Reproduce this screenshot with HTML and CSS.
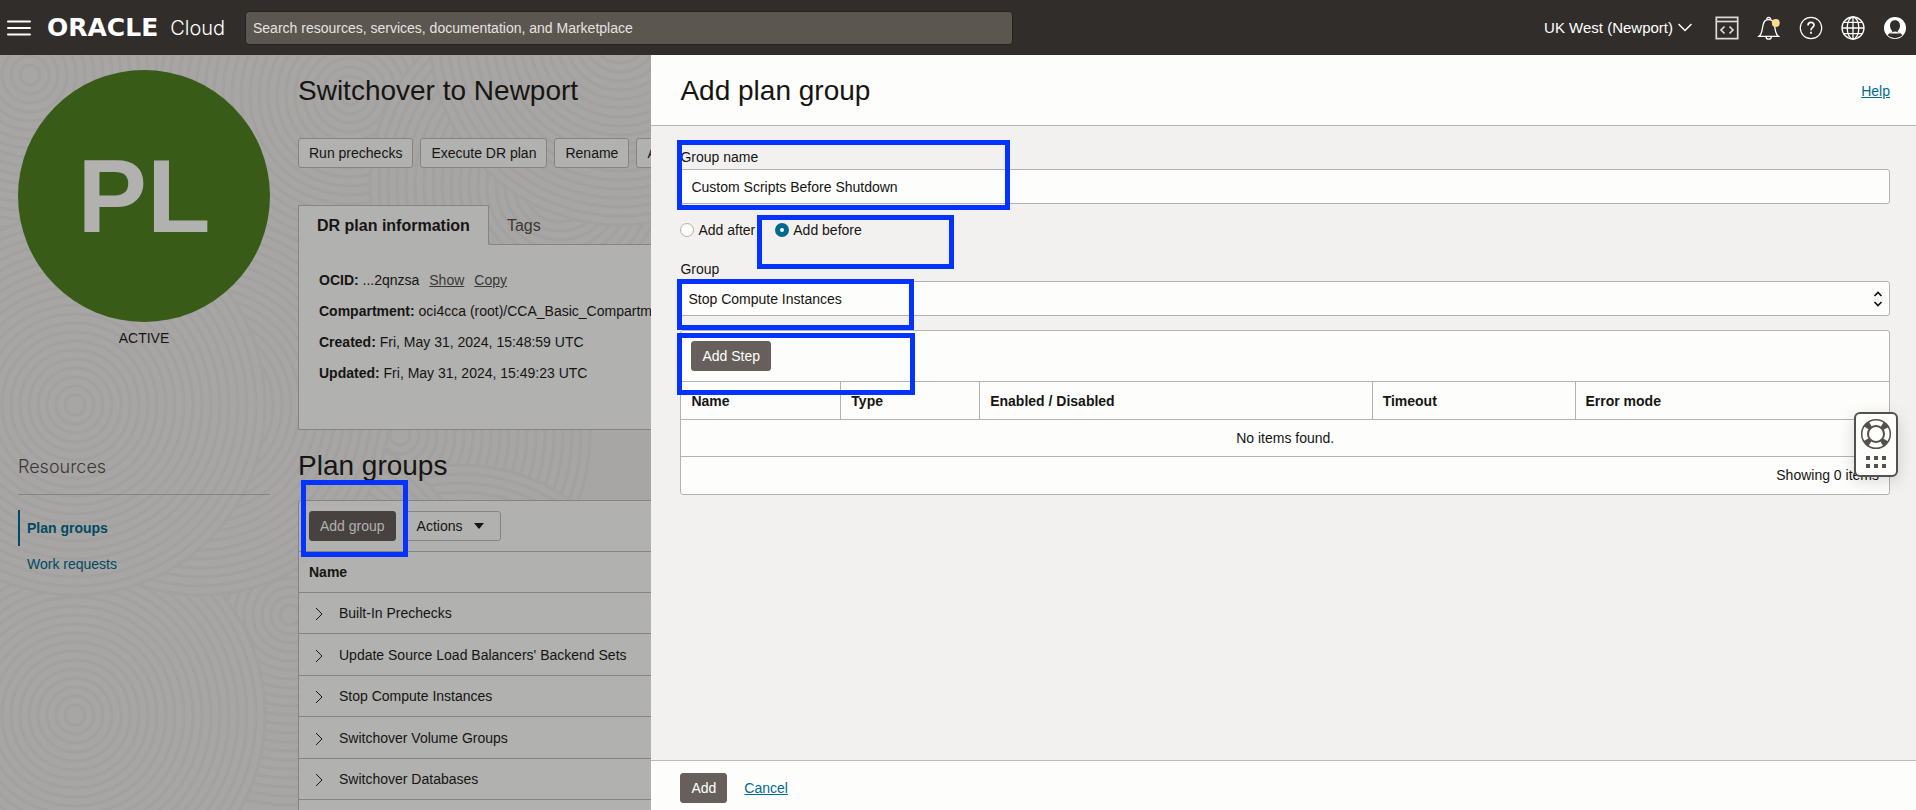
FILE: index.html
```html
<!DOCTYPE html>
<html lang="en">
<head>
  <meta charset="UTF-8">
  <title>Switchover to Newport | Oracle Cloud</title>
  <link rel="stylesheet" href="styles.css">
</head>
<body>

  <!-- Top bar -->
  <header class="topbar">
    <button class="icon-btn menu-btn" aria-label="Menu">
      <svg width="24" height="16" viewBox="0 0 24 16" stroke="#fff" stroke-width="2" stroke-linecap="round"><path d="M1 1.5h22M1 8h22M1 14.5h22"/></svg>
    </button>
    <a class="brand" href="#"><span class="brand-name">ORACLE</span><span class="brand-product">Cloud</span></a>
    <input class="search" type="text" aria-label="Search" placeholder="Search resources, services, documentation, and Marketplace">
    <nav class="tools">
      <button class="region-btn">UK West (Newport)
        <svg width="14" height="9" viewBox="0 0 14 9" fill="none" stroke="#fff" stroke-width="1.5"><path d="M.5 1L7 7.500L13.500 1"/></svg>
      </button>
      <button class="icon-btn" aria-label="Developer tools">
        <svg width="24" height="24" viewBox="0 0 24 24" fill="none" stroke="#e0dad6" stroke-width="1.700"><path d="M1.300 1.300h21.400v21.400H1.300z"/><path d="M1 5.500h22" /><path d="M9.500 10.500L6 14l3.500 3.500M14.500 10.500L18 14l-3.500 3.500"/></svg>
      </button>
      <button class="icon-btn" aria-label="Announcements">
        <svg width="24" height="24" viewBox="0 0 24 24" fill="none" stroke="#fff" stroke-width="1.300"><path d="M2 20.300h19.400c-1.500-1.200-2.300-2.700-2.800-5l-1.200-6C16.700 5.500 14.800 3.500 11.700 3.500S6.700 5.500 6 9.300l-1.200 6c-.5 2.300-1.300 3.800-2.800 5z"/><path d="M9.800 3.300a1.900 1.900 0 1 1 3.800 0M9 20.500a2.700 2.700 0 0 0 5.400 0"/><circle cx="18.800" cy="7" r="4" fill="#fcd98c" stroke="none"/></svg>
      </button>
      <button class="icon-btn" aria-label="Help">
        <svg width="24" height="24" viewBox="0 0 24 24" fill="none" stroke="#fff" stroke-width="1.200"><circle cx="12" cy="12" r="10.700"/><path d="M9 9.500c0-4 6-4 6-.5 0 2.500-3 2.500-3 5.300" stroke-width="1.700"/><path d="M12 15.700v2" stroke-width="1.800"/></svg>
      </button>
      <button class="icon-btn" aria-label="Language">
        <svg width="24" height="24" viewBox="0 0 24 24" fill="none" stroke="#fff" stroke-width="1.300"><circle cx="12" cy="12" r="11"/><ellipse cx="12" cy="12" rx="5.800" ry="11"/><path d="M12 1v22M1 12h22M3 6.300h18M3 17.700h18"/></svg>
      </button>
      <button class="icon-btn" aria-label="Profile">
        <svg width="24" height="24" viewBox="0 0 24 24"><circle cx="12" cy="12" r="11" fill="#fff"/><path d="M12 4.300c3.200 0 5 2.200 5 5.300 0 2.200-.8 4-2.200 5.400v1.200c2 .6 3.700 1.400 4.600 3A10.800 10.800 0 0 1 12 22.200a10.800 10.800 0 0 1-7.400-3c.9-1.600 2.600-2.400 4.600-3V15C7.800 13.600 7 11.800 7 9.600c0-3.100 1.800-5.300 5-5.300z" fill="#312d2a"/><path d="M9.200 16.200c1.800-1 3.800-1 5.600 0l2.700 1.300H6.500z" fill="#fff"/></svg>
      </button>
    </nav>
  </header>

  <main class="stage">

    <!-- Plan details, dimmed behind the drawer -->
    <div class="page">
      <svg class="texture" aria-hidden="true">
        <defs>
          <g id="rings" fill="#a7a6a4" stroke="#a2a19f" stroke-width="3">
            <circle r="190"/><circle r="181"/><circle r="172"/><circle r="163"/><circle r="154"/><circle r="145"/><circle r="136"/><circle r="127"/><circle r="118"/><circle r="109"/><circle r="100"/><circle r="91"/><circle r="82"/><circle r="73"/><circle r="64"/><circle r="55"/><circle r="46"/><circle r="37"/><circle r="28"/><circle r="19"/><circle r="10"/>
          </g>
        </defs>
        <use href="#rings" x="30" y="20"/>
        <use href="#rings" x="350" y="40"/>
        <use href="#rings" x="560" y="130"/>
        <use href="#rings" x="620" y="-20"/>
        <use href="#rings" x="400" y="380"/>
        <use href="#rings" x="460" y="600"/>
        <use href="#rings" x="290" y="560"/>
        <use href="#rings" x="20" y="800"/>
        <use href="#rings" x="75" y="660"/>
        <use href="#rings" x="200" y="350"/>
        <use href="#rings" x="75" y="350"/>
      </svg>

      <aside class="side">
        <div class="avatar">PL</div>
        <p class="status">ACTIVE</p>
        <h2 class="side-title">Resources</h2>
        <nav class="side-nav">
          <a class="side-link active" href="#">Plan groups</a>
          <a class="side-link" href="#">Work requests</a>
        </nav>
      </aside>

      <section class="details">
        <h1 class="heading">Switchover to Newport</h1>
        <div class="actions">
          <button class="btn dim">Run prechecks</button>
          <button class="btn dim">Execute DR plan</button>
          <button class="btn dim">Rename</button>
          <button class="btn dim">Add</button>
        </div>

        <div class="tabs">
          <button class="tab selected">DR plan information</button>
          <button class="tab">Tags</button>
        </div>
        <div class="info">
          <p><b>OCID:</b> ...2qnzsa <a href="#">Show</a><a href="#">Copy</a></p>
          <p><b>Compartment:</b> oci4cca (root)/CCA_Basic_Compartment</p>
          <p><b>Created:</b> Fri, May 31, 2024, 15:48:59 UTC</p>
          <p><b>Updated:</b> Fri, May 31, 2024, 15:49:23 UTC</p>
        </div>

        <h2 class="heading groups-heading">Plan groups</h2>
        <div class="groups">
          <div class="groups-bar">
            <div class="marked mark-add-group"><button class="btn primary dim">Add group</button></div>
            <button class="btn dim">Actions <span class="caret"></span></button>
          </div>
          <table class="groups-table">
            <thead><tr><th>Name</th></tr></thead>
            <tbody>
              <tr><td><svg class="chevron" viewBox="0 0 8 14"><path d="M1 1l6 6-6 6"/></svg>Built-In Prechecks</td></tr>
              <tr><td><svg class="chevron" viewBox="0 0 8 14"><path d="M1 1l6 6-6 6"/></svg>Update Source Load Balancers' Backend Sets</td></tr>
              <tr><td><svg class="chevron" viewBox="0 0 8 14"><path d="M1 1l6 6-6 6"/></svg>Stop Compute Instances</td></tr>
              <tr><td><svg class="chevron" viewBox="0 0 8 14"><path d="M1 1l6 6-6 6"/></svg>Switchover Volume Groups</td></tr>
              <tr><td><svg class="chevron" viewBox="0 0 8 14"><path d="M1 1l6 6-6 6"/></svg>Switchover Databases</td></tr>
              <tr><td></td></tr>
            </tbody>
          </table>
        </div>
      </section>
    </div>

    <!-- Add plan group drawer -->
    <form class="drawer">
      <div class="drawer-head">
        <h2 class="heading">Add plan group</h2>
        <a class="link" href="#">Help</a>
      </div>

      <div class="drawer-body">
        <div class="field marked mark-name">
          <label for="groupName">Group name</label>
          <input class="box" type="text" id="groupName" value="Custom Scripts Before Shutdown">
        </div>

        <div class="radios">
          <label class="radio"><input type="radio" name="position">Add after</label>
          <label class="radio marked mark-before"><input type="radio" name="position" checked>Add before</label>
        </div>

        <div class="field">
          <label for="group">Group</label>
          <div class="select-wrap marked mark-group">
            <select class="box" id="group">
              <option>Stop Compute Instances</option>
            </select>
            <svg class="select-arrows" width="10" height="16" viewBox="0 0 10 16" fill="none" stroke="#161513" stroke-width="1.700"><path d="M1.500 5L5 1.500L8.500 5M1.500 11L5 14.500L8.500 11"/></svg>
          </div>
        </div>

        <div class="steps">
          <div class="steps-bar marked mark-step"><button class="btn primary" type="button">Add Step</button></div>
          <table class="steps-table">
            <colgroup><col class="c-name"><col class="c-type"><col class="c-enabled"><col class="c-timeout"><col></colgroup>
            <thead>
              <tr><th>Name</th><th>Type</th><th>Enabled / Disabled</th><th>Timeout</th><th>Error mode</th></tr>
            </thead>
            <tbody>
              <tr><td class="empty" colspan="5">No items found.</td></tr>
            </tbody>
            <tfoot>
              <tr><td class="count" colspan="5">Showing 0 items</td></tr>
            </tfoot>
          </table>
        </div>
      </div>

      <div class="drawer-foot">
        <button class="btn primary" type="button">Add</button>
        <a class="link" href="#">Cancel</a>
      </div>
    </form>

    <button class="support" aria-label="Support">
      <svg width="32" height="32" viewBox="0 0 32 32" fill="none" stroke="#55504c"><circle cx="16" cy="16" r="11" stroke-width="7" stroke-dasharray="5.280 12" stroke-dashoffset="-6"/><circle cx="16" cy="16" r="14.300" stroke-width="1.500"/><circle cx="16" cy="16" r="8" stroke-width="2"/></svg>
      <svg width="20" height="12" viewBox="0 0 20 12" fill="#55504c"><path d="M0 0h4v4H0zM8 0h4v4H8zM16 0h4v4h-4zM0 8h4v4H0zM8 8h4v4H8zM16 8h4v4h-4z"/></svg>
    </button>
  </main>

</body>
</html>
```

FILE: styles.css
```css
*,
*::after {
  box-sizing: border-box;
  margin: 0;
  padding: 0;
}

body {
  font-family: "Liberation Sans", Arial, sans-serif;
  font-size: 14px;
  line-height: 20px;
  color: #161513;
  height: 100vh;
  display: flex;
  flex-direction: column;
  overflow: hidden;
}

button,
input,
select {
  font: inherit;
  color: inherit;
}

button {
  cursor: pointer;
}

/* Top bar */
.topbar {
  display: flex;
  align-items: center;
  flex: none;
  height: 55px;
  padding: 0 9px 0 7px;
  background: #312d2a;
  color: #fff;
}

.icon-btn {
  display: flex;
  background: none;
  border: none;
}

.brand {
  display: flex;
  align-items: center;
  gap: 12px;
  width: 198px;
  margin-left: 16px;
  color: #fff;
  text-decoration: none;
}

.brand-name {
  font-family: "DejaVu Sans", sans-serif;
  font-size: 25px;
  font-weight: bold;
}

.brand-product {
  font-family: Inter, sans-serif;
  font-size: 20px;
  font-weight: 300;
}

.search {
  width: 768px;
  height: 34px;
  padding: 0 7px;
  background: #5b5650;
  border: 1px solid #24211f;
  border-radius: 4px;
}

.search::placeholder {
  color: #e6e3e0;
  opacity: 1;
}

.tools {
  display: flex;
  align-items: center;
  gap: 18px;
  margin-left: auto;
}

.region-btn {
  display: flex;
  align-items: center;
  gap: 5px;
  margin-right: 5px;
  background: none;
  border: none;
  font-size: 15px;
}

/* Dimmed page */
.stage {
  position: relative;
  flex: 1;
  min-height: 0;
  overflow: hidden;
}

.page {
  position: relative;
  display: flex;
  gap: 28px;
  height: 100%;
  padding: 15px 0 0 18px;
  background: #a7a6a4;
  overflow: hidden;
}

.texture {
  position: absolute;
  top: 0;
  left: 0;
  width: 100%;
  height: 100%;
}

.side,
.details {
  position: relative;
}

.side {
  flex: none;
  width: 252px;
}

.avatar {
  height: 252px;
  border-radius: 50%;
  background: #385c17;
  color: #b1b1af;
  font-size: 104px;
  font-weight: bold;
  line-height: 252px;
  text-align: center;
}

.status {
  margin-top: 6px;
  text-align: center;
}

.side-title {
  height: 42px;
  margin: 105px 0 15px;
  border-bottom: 1px solid #868381;
  color: #3a3836;
  font-family: Inter, sans-serif;
  font-size: 18px;
  font-weight: 300;
  line-height: 28px;
}

.side-link {
  display: block;
  padding: 8px 7px;
  border-left: 2px solid transparent;
  color: #004a62;
  text-decoration: none;
}

.side-link.active {
  border-color: #004a62;
  font-weight: bold;
}

.details {
  flex: 1;
}

.heading {
  font-size: 28px;
  font-weight: normal;
  line-height: 42px;
}

.actions {
  display: flex;
  gap: 7px;
  margin: 26px 0 37px;
}

.btn {
  height: 30px;
  padding: 0 10px;
  background: none;
  border: 1px solid #868381;
  border-radius: 3px;
  white-space: nowrap;
}

.btn.primary {
  background: #665f5b;
  border-color: #665f5b;
  color: #fff;
}

.btn.dim {
  background: #b1b1af;
}

.btn.primary.dim {
  background: #474240;
  border-color: #474240;
  color: #b1b1af;
}

.tabs {
  display: flex;
}

.tab {
  height: 40px;
  padding: 2px 18px 0;
  background: none;
  border: none;
  border-bottom: 1px solid #868381;
  color: #3a3836;
  font-size: 16px;
}

.tab.selected {
  background: #b1b1af;
  border: 1px solid #868381;
  border-bottom-color: #b1b1af;
  color: #161513;
  font-weight: bold;
}

.tabs::after {
  content: "";
  flex: 1;
  border-bottom: 1px solid #868381;
}

.info {
  height: 185px;
  padding: 20px;
  background: #b1b1af;
  border: 1px solid #868381;
  border-top: none;
  line-height: 31px;
}

.info a {
  margin: 0 4px 0 6px;
  color: #3a3836;
}

.groups-heading {
  margin: 15px 0 13px;
}

.groups {
  background: #b1b1af;
  border: 1px solid #868381;
  border-radius: 3px;
}

.groups-bar {
  display: flex;
  align-items: center;
  gap: 10px;
  height: 50px;
  padding: 0 10px;
}

.caret {
  display: inline-block;
  margin: 0 6px 2px 8px;
  border: 5px solid transparent;
  border-top: 6px solid #161513;
  border-bottom: none;
}

.groups-table {
  width: 100%;
  border-collapse: collapse;
}

.groups-table th {
  height: 41px;
  padding-left: 10px;
  border-top: 1px solid #868381;
  text-align: left;
}

.groups-table td {
  height: 41px;
  padding-left: 16px;
  border-top: 1px solid #868381;
}

.groups-table tr:nth-child(even) td {
  height: 42px;
}

.chevron {
  width: 8px;
  height: 14px;
  margin-right: 16px;
  fill: none;
  stroke: #161513;
  vertical-align: -3px;
}

/* Drawer */
.drawer {
  position: absolute;
  top: 0;
  right: 0;
  bottom: 0;
  left: 34%;
  display: flex;
  flex-direction: column;
  background: #f3f1f0;
}

.drawer-head {
  display: flex;
  align-items: center;
  justify-content: space-between;
  height: 71px;
  padding: 2px 26px 0 29px;
  background: #fdfdfb;
  border-bottom: 1px solid #b5b2ae;
}

.link {
  color: #006b8f;
}

.drawer-body {
  flex: 1;
  padding: 21px 26px 0 29px;
}

.field > label {
  display: block;
  height: 22px;
}

.box {
  display: block;
  width: 100%;
  height: 35px;
  padding: 0 10px;
  background: #fdfdfb;
  border: 1px solid #b5b2ae;
  border-radius: 3px;
}

.radios {
  display: flex;
  gap: 20px;
  margin: 16px 0 19px;
}

.radio {
  display: flex;
  align-items: center;
  gap: 4px;
}

.radio input {
  appearance: none;
  width: 14px;
  height: 14px;
  background: #fdfdfb;
  border: 1px solid #b5b2ae;
  border-radius: 50%;
}

.radio input:checked {
  border: 5px solid #006b8f;
}

.select-wrap select {
  appearance: none;
  padding: 0 7px;
}

.select-arrows {
  position: absolute;
  top: 10px;
  right: 7px;
  pointer-events: none;
}

.steps {
  margin-top: 14px;
  background: #fdfdfb;
  border: 1px solid #b5b2ae;
  border-radius: 3px;
}

.steps-bar {
  height: 50px;
  padding: 10px;
}

.steps-table {
  width: 100%;
  border-collapse: collapse;
  table-layout: fixed;
}

.c-name { width: 13.2%; }
.c-type { width: 11.5%; }
.c-enabled { width: 32.5%; }
.c-timeout { width: 16.8%; }

.steps-table th,
.steps-table td {
  height: 37px;
  padding: 0 10px;
  border-top: 1px solid #b5b2ae;
}

.steps-table th {
  height: 38px;
  text-align: left;
}

.steps-table th + th {
  border-left: 1px solid #b5b2ae;
}

.steps-table .empty {
  text-align: center;
}

.steps-table .count {
  text-align: right;
}

.drawer-foot {
  display: flex;
  align-items: center;
  gap: 17px;
  height: 50px;
  padding: 4px 29px 0;
  background: #fdfdfb;
  border-top: 1px solid #bfb9b0;
}

/* Blue highlight frames */
.marked {
  position: relative;
}

.marked::after {
  content: "";
  position: absolute;
  border: 5px solid #0433ff;
  pointer-events: none;
}

.mark-add-group::after {
  top: -31px;
  right: -12px;
  bottom: -16px;
  left: -8px;
}

.mark-name::after {
  top: -7px;
  bottom: -6px;
  left: -3px;
  width: 333px;
}

.mark-before::after {
  top: -5px;
  left: -18px;
  width: 197px;
  height: 54px;
}

.mark-group::after {
  top: -2px;
  left: -3px;
  width: 237px;
  height: 51px;
}

.mark-step::after {
  top: 2px;
  left: -4px;
  width: 238px;
  height: 62px;
}

/* Support widget */
.support {
  position: absolute;
  top: 357px;
  right: 18px;
  display: flex;
  flex-direction: column;
  align-items: center;
  gap: 6px;
  width: 44px;
  height: 65px;
  padding: 4px 0 0;
  background: #fdfdfb;
  border: 2px solid #55504c;
  border-radius: 6px;
  box-shadow: 0 4px 16px rgba(0, 0, 0, 0.15);
}
```
